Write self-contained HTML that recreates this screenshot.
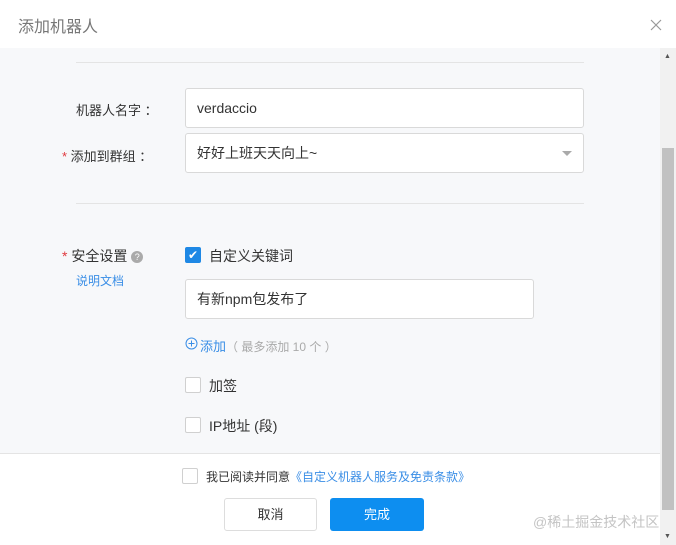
<html><head><style>
body{margin:0;width:676px;height:545px;overflow:hidden;background:#fff;font-family:"Liberation Sans","Noto Sans CJK SC",sans-serif;position:relative;font-size:13px;color:#333}
.a{position:absolute}
.inp{position:absolute;background:#fff;border:1px solid #d9d9d9;border-radius:3px;box-sizing:border-box;font-size:14px;color:#333;padding-left:11px;display:flex;align-items:center}
.cb{position:absolute;width:15px;height:15px;border:1px solid #d0d0d0;border-radius:2px;background:#fff;box-sizing:border-box}
.lab{position:absolute;font-size:13px;color:#333}
.red{color:#e0393e}
</style></head><body>
<div class="a" style="left:18px;top:13px;font-size:16px;color:#777">添加机器人</div>
<svg class="a" style="left:650px;top:19px" width="12" height="12"><path d="M1 1L11 11M11 1L1 11" stroke="#999" stroke-width="1.2"/></svg>
<div class="a" style="left:0;top:48px;width:660px;height:405px;background:#f7f8fa"></div>
<div class="a" style="left:660px;top:48px;width:16px;height:497px;background:#f1f1f1"></div>
<div class="a" style="left:662px;top:148px;width:12px;height:362px;background:#c1c1c1"></div>
<div class="a" style="left:664px;top:53px;font-size:7px;color:#555">▲</div>
<div class="a" style="left:664px;top:533px;font-size:7px;color:#555">▼</div>
<div class="a" style="left:76px;top:62px;width:508px;height:1px;background:#e4e4e4"></div>
<div class="a" style="left:76px;top:203px;width:508px;height:1px;background:#e4e4e4"></div>
<div class="lab" style="left:76px;top:100px">机器人名字 ：</div>
<div class="inp" style="left:185px;top:88px;width:399px;height:40px">verdaccio</div>
<div class="lab" style="left:62px;top:146px"><span class="red">*</span> 添加到群组 ：</div>
<div class="inp" style="left:185px;top:133px;width:399px;height:40px">好好上班天天向上~</div>
<div class="a" style="left:562px;top:151px;width:0;height:0;border-left:5px solid transparent;border-right:5px solid transparent;border-top:5px solid #aaa"></div>
<div class="lab" style="left:62px;top:246px;font-size:14px"><span class="red">*</span> 安全设置 <span style="display:inline-block;width:12px;height:12px;border-radius:6px;background:#aaa;color:#fff;font-size:9px;text-align:center;line-height:12px;vertical-align:1px">?</span></div>
<div class="a" style="left:76px;top:272px;font-size:12px;color:#3a8ee6">说明文档</div>
<div class="a" style="left:185px;top:247px;width:16px;height:16px;background:#1e88e5;border-radius:2px;color:#fff;font-size:12px;text-align:center;line-height:16px">✔</div>
<div class="a" style="left:209px;top:246px;font-size:14px">自定义关键词</div>
<div class="inp" style="left:185px;top:279px;width:349px;height:40px">有新npm包发布了</div>
<svg class="a" style="left:185px;top:337px" width="13" height="13"><circle cx="6.5" cy="6.5" r="5.5" fill="none" stroke="#3a8ee6"/><path d="M3.5 6.5H9.5M6.5 3.5V9.5" stroke="#3a8ee6"/></svg>
<div class="a" style="left:200px;top:336px;font-size:13px;color:#3a8ee6">添加<span style="color:#aaa;font-size:12px">（ 最多添加 10 个 ）</span></div>
<div class="cb" style="left:185px;top:377px;width:16px;height:16px"></div>
<div class="a" style="left:209px;top:376px;font-size:14px">加签</div>
<div class="cb" style="left:185px;top:417px;width:16px;height:16px"></div>
<div class="a" style="left:209px;top:416px;font-size:14px">IP地址 (段)</div>
<div class="a" style="left:0;top:453px;width:660px;height:1px;background:#e4e4e4"></div>
<div class="cb" style="left:182px;top:468px;width:16px;height:16px"></div>
<div class="a" style="left:206px;top:468px;font-size:12px">我已阅读并同意<span style="color:#3a8ee6">《自定义机器人服务及免责条款》</span></div>
<div class="a" style="left:224px;top:498px;width:93px;height:33px;border:1px solid #ddd;border-radius:3px;box-sizing:border-box;text-align:center;line-height:31px;font-size:13px">取消</div>
<div class="a" style="left:330px;top:498px;width:94px;height:33px;background:#0d8ef0;border-radius:3px;color:#fff;text-align:center;line-height:33px;font-size:13px">完成</div>
<div class="a" style="left:533px;top:512px;font-size:14px;color:#c4c4c4">@稀土掘金技术社区</div>
</body></html>
